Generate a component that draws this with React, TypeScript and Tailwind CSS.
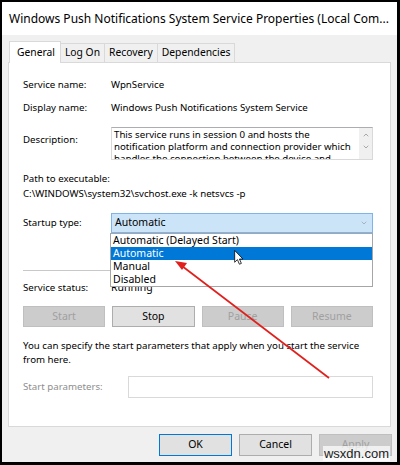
import { ChevronDown, ChevronUp } from "lucide-react";

const font = { fontFamily: '"Noto Sans", "Open Sans", sans-serif' };

const actionButtons = [
  { label: "Start", enabled: false },
  { label: "Stop", enabled: true },
  { label: "Pause", enabled: false },
  { label: "Resume", enabled: false },
];

const startupOptions = ["Automatic (Delayed Start)", "Automatic", "Manual", "Disabled"];

function Tab({ label, active }: { label: string; active?: boolean }) {
  if (active) {
    return (
      <div className="h-[22px] pl-[7px] pr-[5px] -mb-px relative z-10 flex items-center bg-white border border-b-0 border-[#d9d9d9] text-[10.3px] text-black">
        {label}
      </div>
    );
  }
  return (
    <div className="h-[19px] px-[4px] flex items-center bg-[#f0f0f0] border border-b-0 border-l-0 border-[#d9d9d9] text-[10.3px] text-black">
      {label}
    </div>
  );
}

export default function App() {
  return (
    <div style={font} className="relative w-[400px] h-[465px] overflow-hidden bg-black border-l-2 border-t-2 border-r-[3px] border-b-[3px] border-black select-none">
      <div className="w-full h-full bg-[#f0f0f0] flex flex-col">
        {/* title bar */}
        <div className="h-[33px] shrink-0 bg-white flex items-center justify-between pl-[7px] pr-[8px]">
          <span className="text-[12px] text-black whitespace-nowrap">
            Windows Push Notifications System Service Properties (Local Com...
          </span>
          <svg width="12" height="12" viewBox="0 0 12 12" className="mr-[1px]">
            <path d="M0.5 0.5 L11.5 11.5 M11.5 0.5 L0.5 11.5" stroke="#222" strokeWidth="1" />
          </svg>
        </div>

        {/* tabs */}
        <div className="flex items-end pl-[7px] pt-[6px] relative z-10">
          <Tab label="General" active />
          <Tab label="Log On" />
          <Tab label="Recovery" />
          <Tab label="Dependencies" />
        </div>

        {/* tab panel */}
        <div className="mx-[6px] h-[365px] bg-white border border-[#d9d9d9] pl-[14px] pr-[17px] pt-[14px] text-[9.7px] text-black">
          <div className="flex h-[16px] items-center">
            <div className="w-[88px]">Service name:</div>
            <div>WpnService</div>
          </div>
          <div className="flex h-[16px] items-center mt-[7px]">
            <div className="w-[88px]">Display name:</div>
            <div>Windows Push Notifications System Service</div>
          </div>
          <div className="flex mt-[11px]">
            <div className="w-[88px] pt-[6px]">Description:</div>
            <div className="flex-1 h-[33px] border border-[#d9d9d9] border-t-[#abadb3] flex overflow-hidden">
              <div className="flex-1 px-[2px] leading-[12px] pt-px overflow-hidden whitespace-nowrap">
                This service runs in session 0 and hosts the
                <br />
                notification platform and connection provider which
                <br />
                handles the connection between the device and
              </div>
              <div className="w-[13px] bg-[#f0f0f0] flex flex-col items-center pt-[3px] gap-[4px] text-[#606060]">
                <ChevronUp size={8} strokeWidth={1.5} />
                <ChevronDown size={8} strokeWidth={1.5} />
              </div>
            </div>
          </div>
          <div className="mt-[12px] h-[15px] flex items-center">Path to executable:</div>
          <div className="h-[15px] flex items-center">C:\WINDOWS\system32\svchost.exe -k netsvcs -p</div>

          <div className="flex items-center mt-[11px]">
            <div className="w-[88px]">Startup type:</div>
            <div className="flex-1 h-[20px] bg-[#cce4f7] border border-[#7eb4ea] flex items-center justify-between pl-[3px] pr-[4px] text-[10.5px]">
              <span>Automatic</span>
              <ChevronDown size={8} strokeWidth={1.5} className="text-[#808080]" />
            </div>
          </div>

          <div className="mt-[37px] h-px bg-[#c8c8c8]" />

          <div className="flex h-[16px] items-center mt-[9px]">
            <div className="w-[88px]">Service status:</div>
            <div className="text-[10.5px]">Running</div>
          </div>

          <div className="grid grid-cols-4 gap-[7px] mt-[10px] text-[10.5px]">
            {actionButtons.map((b) => (
              <div
                key={b.label}
                className={
                  b.enabled
                    ? "h-[21px] flex items-center justify-center bg-[#e1e1e1] border border-[#adadad] text-black"
                    : "h-[21px] flex items-center justify-center bg-[#cccccc] border border-[#bfbfbf] text-[#a0a0a0]"
                }
              >
                {b.label}
              </div>
            ))}
          </div>

          <div className="mt-[12px] leading-[14px] whitespace-nowrap">
            You can specify the start parameters that apply when you start the service
            <br />
            from here.
          </div>

          <div className="flex items-center mt-[9px]">
            <div className="w-[105px] text-[#8e8e8e]">Start parameters:</div>
            <div className="flex-1 h-[22px] border border-[#d9d9d9] bg-white" />
          </div>
        </div>

        {/* dialog buttons */}
        <div className="flex justify-end gap-[7px] pr-[5px] mt-[7px] text-[10.5px]">
          <div className="w-[73px] h-[22px] flex items-center justify-center bg-[#e1e1e1] border border-[#0078d7] text-black">OK</div>
          <div className="w-[73px] h-[22px] flex items-center justify-center bg-[#e1e1e1] border border-[#adadad] text-black">Cancel</div>
          <div className="w-[73px] h-[22px] flex items-center justify-center bg-[#cccccc] border border-[#bfbfbf] text-[#a0a0a0]">Apply</div>
        </div>
      </div>

      {/* open dropdown list */}
      <div className="absolute left-[108px] top-[231px] w-[263px] border border-[#a6a6a6] bg-white text-[10.5px] text-black">
        {startupOptions.map((o) => (
          <div
            key={o}
            className={
              o === "Automatic"
                ? "h-[13px] leading-[13px] pl-[2px] bg-[#0078d7] text-white"
                : "h-[13px] leading-[13px] pl-[2px]"
            }
          >
            {o}
          </div>
        ))}
      </div>

      {/* red annotation arrow */}
      <svg className="absolute left-[-2px] top-[-2px] pointer-events-none" width="400" height="465" viewBox="0 0 400 465">
        <line x1="329" y1="378" x2="182" y2="266" stroke="#e0201c" strokeWidth="1.8" />
        <polygon points="175,261 187,263 182,270" fill="#e0201c" />
      </svg>

      {/* mouse cursor */}
      <svg className="absolute left-[232px] top-[248px] pointer-events-none" width="10" height="15" viewBox="0 0 12 19">
        <path d="M0.5 0.5 L0.5 15.5 L4 12.2 L6.5 18 L9 17 L6.6 11.4 L11 11.4 Z" fill="white" stroke="black" strokeWidth="1" />
      </svg>

      {/* watermark */}
      <div
        style={{ fontFamily: '"Liberation Sans", Arial, sans-serif' }}
        className="absolute right-[7px] bottom-[1px] text-[13px] text-[#222] bg-white/70 px-px leading-[15px]"
      >
        wsxdn.com
      </div>
    </div>
  );
}
